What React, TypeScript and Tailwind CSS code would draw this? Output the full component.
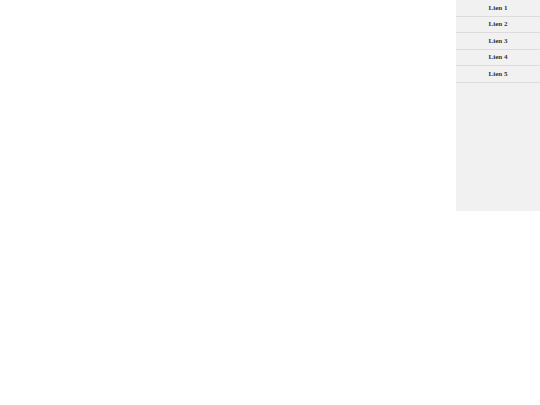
import React from 'react';

const links = ['Lien 1', 'Lien 2', 'Lien 3', 'Lien 4', 'Lien 5'];

export default function App() {
  return (
    <div className="w-[540px] h-[405px] bg-white flex justify-end items-start">
      <nav className="w-[84px] h-[211px] bg-[#f1f1f1]">
        <ul>
          {links.map((l) => (
            <li
              key={l}
              className="h-[16.5px] border-b border-[#dcdcdc] flex items-center justify-center text-[7px] font-bold text-[#333] font-['Liberation_Serif',serif]"
            >
              {l}
            </li>
          ))}
        </ul>
      </nav>
    </div>
  );
}
